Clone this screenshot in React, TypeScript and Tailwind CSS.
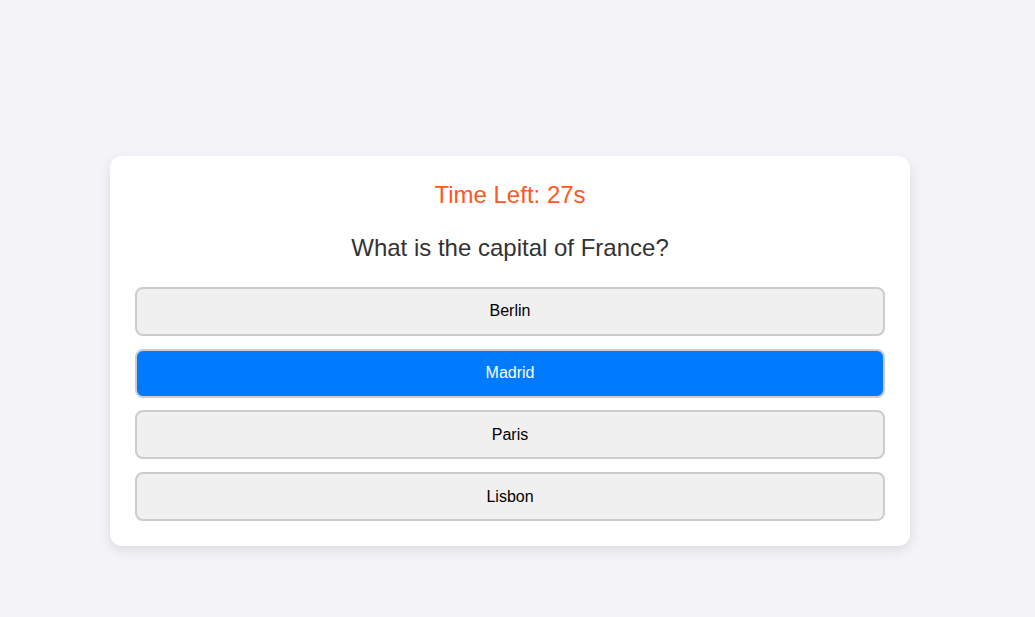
const options = ['Berlin', 'Madrid', 'Paris', 'Lisbon'];

export default function App() {
  const selected = 'Madrid';

  return (
    <div className="min-h-screen pt-[85px] pr-[15px] flex items-center justify-center bg-[#f4f4f8] font-['Liberation_Sans',Arial,sans-serif]">
      <div className="w-[800px] bg-white rounded-xl p-[25px] shadow-[0_4px_12px_rgba(0,0,0,0.1)] text-center">
        <div className="text-[24px] leading-[28px] text-[#ff5722] mb-[25px]">Time Left: 27s</div>
        <h2 className="text-[24px] leading-[28px] text-[#333] mb-[25px]">What is the capital of France?</h2>
        <div className="flex flex-col gap-[12.7px]">
          {options.map((opt) => (
            <button
              key={opt}
              className={
                opt === selected
                  ? 'w-full py-[13.5px] text-base leading-[18px] rounded-lg border-2 border-[#ccc] bg-[#007bff] text-white'
                  : 'w-full py-[13.5px] text-base leading-[18px] rounded-lg border-2 border-[#ccc] bg-[#f0f0f0] text-black'
              }
            >
              {opt}
            </button>
          ))}
        </div>
      </div>
    </div>
  );
}
